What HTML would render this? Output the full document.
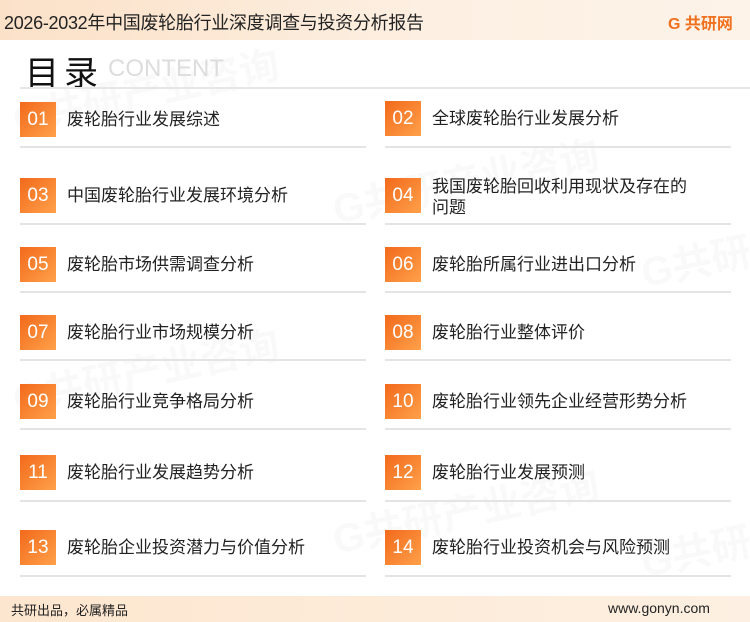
<!DOCTYPE html>
<html><head><meta charset="utf-8"><style>
*{margin:0;padding:0;box-sizing:border-box}
body{width:750px;height:622px;position:relative;background:#fff;font-family:"Liberation Sans","Noto Sans CJK SC",sans-serif;overflow:hidden;color:#222}
.hdr{position:absolute;left:0;top:0;width:750px;height:40px;background:linear-gradient(90deg,#fbe1c8,#fdf0e3 60%,#fdf3e8)}
.hdr .t{position:absolute;left:4px;top:9px;font-size:18px;color:#222;letter-spacing:-0.3px}
.logo{position:absolute;left:668px;top:10px;font-size:16px;font-weight:bold;color:#f0701e}
.ft{position:absolute;left:0;top:596px;width:750px;height:26px;background:linear-gradient(90deg,#fde6cf,#fdf0e2)}
.ft .a{position:absolute;left:11px;top:4px;font-size:13px}
.ft .b{position:absolute;left:608px;top:4px;font-size:14px}
.ttl{position:absolute;left:25px;top:46px;font-size:34px;color:#111;letter-spacing:5px}
.ct{position:absolute;left:108px;top:55px;font-size:24px;color:#ddd}
.hl{position:absolute;left:20px;top:87px;width:730px;height:2px;background:#e6e6e6}
.box{position:absolute;width:36px;height:35px;background:linear-gradient(135deg,#f26a1b,#ffa04a);color:#fff;font-size:19px;text-align:center;line-height:35px}
.tx{position:absolute;font-size:17px;color:#222;line-height:21px}
.ln{position:absolute;width:346px;height:2px;background:#e4e4e4}
.wm{position:absolute;font-size:40px;font-weight:bold;color:rgba(0,0,0,0.025);transform:rotate(-12deg);white-space:nowrap}
</style></head><body>
<div class="hdr"><div class="t">2026-2032年中国废轮胎行业深度调查与投资分析报告</div><div class="logo">G 共研网</div></div>
<div class="wm" style="left:10px;top:60px">G共研产业咨询</div>
<div class="wm" style="left:330px;top:150px">G共研产业咨询</div>
<div class="wm" style="left:10px;top:340px">G共研产业咨询</div>
<div class="wm" style="left:330px;top:480px">G共研产业咨询</div>
<div class="wm" style="left:640px;top:230px">G共研</div>
<div class="wm" style="left:640px;top:520px">G共研</div>
<div class="ttl">目录</div><div class="ct">CONTENT</div>
<div class="hl"></div>

<div class="box" style="left:20px;top:102px">01</div><div class="tx" style="left:67px;top:109px">废轮胎行业发展综述</div><div class="ln" style="left:20px;top:146px"></div>
<div class="box" style="left:385px;top:101px">02</div><div class="tx" style="left:432px;top:108px">全球废轮胎行业发展分析</div><div class="ln" style="left:385px;top:146px"></div>

<div class="box" style="left:20px;top:178px">03</div><div class="tx" style="left:67px;top:185px">中国废轮胎行业发展环境分析</div><div class="ln" style="left:20px;top:223px"></div>
<div class="box" style="left:385px;top:178px">04</div><div class="tx" style="left:432px;top:176px">我国废轮胎回收利用现状及存在的<br>问题</div><div class="ln" style="left:385px;top:223px"></div>

<div class="box" style="left:20px;top:247px">05</div><div class="tx" style="left:67px;top:254px">废轮胎市场供需调查分析</div><div class="ln" style="left:20px;top:291px"></div>
<div class="box" style="left:385px;top:247px">06</div><div class="tx" style="left:432px;top:254px">废轮胎所属行业进出口分析</div><div class="ln" style="left:385px;top:291px"></div>

<div class="box" style="left:20px;top:315px">07</div><div class="tx" style="left:67px;top:322px">废轮胎行业市场规模分析</div><div class="ln" style="left:20px;top:359px"></div>
<div class="box" style="left:385px;top:315px">08</div><div class="tx" style="left:432px;top:322px">废轮胎行业整体评价</div><div class="ln" style="left:385px;top:359px"></div>

<div class="box" style="left:20px;top:384px">09</div><div class="tx" style="left:67px;top:391px">废轮胎行业竞争格局分析</div><div class="ln" style="left:20px;top:428px"></div>
<div class="box" style="left:385px;top:384px">10</div><div class="tx" style="left:432px;top:391px">废轮胎行业领先企业经营形势分析</div><div class="ln" style="left:385px;top:428px"></div>

<div class="box" style="left:20px;top:455px">11</div><div class="tx" style="left:67px;top:462px">废轮胎行业发展趋势分析</div><div class="ln" style="left:20px;top:500px"></div>
<div class="box" style="left:385px;top:455px">12</div><div class="tx" style="left:432px;top:462px">废轮胎行业发展预测</div><div class="ln" style="left:385px;top:500px"></div>

<div class="box" style="left:20px;top:530px">13</div><div class="tx" style="left:67px;top:537px">废轮胎企业投资潜力与价值分析</div><div class="ln" style="left:20px;top:575px"></div>
<div class="box" style="left:385px;top:530px">14</div><div class="tx" style="left:432px;top:537px">废轮胎行业投资机会与风险预测</div><div class="ln" style="left:385px;top:575px"></div>

<div class="ft"><div class="a">共研出品，必属精品</div><div class="b">www.gonyn.com</div></div>
</body></html>
